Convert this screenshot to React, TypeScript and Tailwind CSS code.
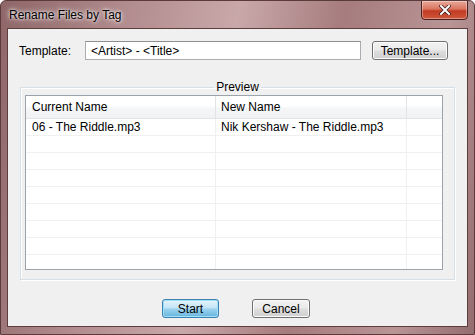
import React from 'react';

const rows = [
  { current: '06 - The Riddle.mp3', next: 'Nik Kershaw - The Riddle.mp3' },
  { current: '', next: '' },
  { current: '', next: '' },
  { current: '', next: '' },
  { current: '', next: '' },
  { current: '', next: '' },
  { current: '', next: '' },
  { current: '', next: '' },
  { current: '', next: '' },
];

export default function App() {
  return (
    <div
      className="w-[475px] h-[335px] overflow-hidden rounded-t-[6px] border border-[#5b3a3c] bg-[linear-gradient(100deg,#8e6668_0%,#b38d8f_25%,#c9a8a9_45%,#a67c7e_65%,#b99596_85%,#946d6f_100%)] flex flex-col px-[6px] pb-[7px] text-[12px] text-black"
      style={{ fontFamily: '"Segoe UI", "Liberation Sans", Arial, sans-serif' }}
    >
      {/* title bar */}
      <div className="h-[27px] flex items-start justify-between shrink-0">
        <span className="pl-[2px] pt-[5px] text-[12px] leading-[18px] text-black [text-shadow:0_0_6px_#fff,0_0_3px_#fff]">
          Rename Files by Tag
        </span>
        <div className="mt-[-1px] w-[47px] h-[20px] rounded-b-[4px] border border-[#4a2121] bg-[linear-gradient(#e9a99a_0%,#d9745f_45%,#c13b22_55%,#d0573c_100%)] shadow-[inset_0_0_0_1px_rgba(255,255,255,0.35)] flex items-center justify-center">
          <svg width="12" height="10" viewBox="0 0 12 10">
            <path d="M2 1 L10 9 M10 1 L2 9" stroke="#3a1a1a" strokeWidth="3.4" strokeLinecap="square" />
            <path d="M2 1 L10 9 M10 1 L2 9" stroke="#fff" strokeWidth="2" strokeLinecap="square" />
          </svg>
        </div>
      </div>

      {/* client area */}
      <div className="flex-1 border border-[#5d3d3f] bg-[#f0f0f0] flex flex-col">
        <div className="flex items-center mt-[12px] pl-[11px]">
          <span className="w-[66px]">Template:</span>
          <div className="w-[276px] h-[19px] border border-[#abadb3] border-t-[#8e8f8f] bg-white flex items-center pl-[5px]">
            &lt;Artist&gt; - &lt;Title&gt;
          </div>
          <button className="ml-[11px] w-[76px] h-[19px] rounded-[3px] border border-[#707070] bg-[linear-gradient(#f2f2f2_0%,#ebebeb_45%,#dddddd_55%,#cfcfcf_100%)] shadow-[inset_0_0_0_1px_#fcfcfc] leading-none">
            Template...
          </button>
        </div>

        <fieldset className="mt-[20px] mx-[12px] h-[200px] border border-[#d5dfe5] shadow-[inset_1px_1px_0_#fff,1px_1px_0_#fff] px-[4px] pb-[8px] min-w-0">
          <legend className="mx-auto px-[2px] leading-[14px]">Preview</legend>
          <div className="mt-[1px] h-[175px] mr-[7px] border border-[#9da3aa] bg-white overflow-hidden flex flex-col">
            <div className="h-[23px] shrink-0 flex border-b border-[#e2e3e4] bg-[linear-gradient(#ffffff_0%,#ffffff_45%,#f5f6f7_55%,#f1f2f4_100%)]">
              <div className="w-[190px] border-r border-[#e2e3e5] pl-[6px] flex items-center">Current Name</div>
              <div className="w-[191px] border-r border-[#e2e3e5] pl-[5px] flex items-center">New Name</div>
              <div className="flex-1" />
            </div>
            {rows.map((r, i) => (
              <div key={i} className="h-[17px] shrink-0 flex border-b border-[#f0f0f0]">
                <div className="w-[190px] border-r border-[#f0f0f0] pl-[6px] flex items-center">{r.current}</div>
                <div className="w-[191px] border-r border-[#f0f0f0] pl-[5px] flex items-center">{r.next}</div>
                <div className="flex-1" />
              </div>
            ))}
          </div>
        </fieldset>

        <div className="mt-[19px] flex justify-center gap-[33px] pr-[3px]">
          <button className="w-[57px] h-[19px] rounded-[3px] border border-[#3c7fb1] bg-[linear-gradient(#e5f4fc_0%,#c4e5f6_45%,#98d1ef_55%,#68b3db_100%)] shadow-[inset_0_0_0_1px_#9fe0fb] leading-none">
            Start
          </button>
          <button className="w-[58px] h-[19px] rounded-[3px] border border-[#707070] bg-[linear-gradient(#f2f2f2_0%,#ebebeb_45%,#dddddd_55%,#cfcfcf_100%)] shadow-[inset_0_0_0_1px_#fcfcfc] leading-none">
            Cancel
          </button>
        </div>
      </div>
    </div>
  );
}
